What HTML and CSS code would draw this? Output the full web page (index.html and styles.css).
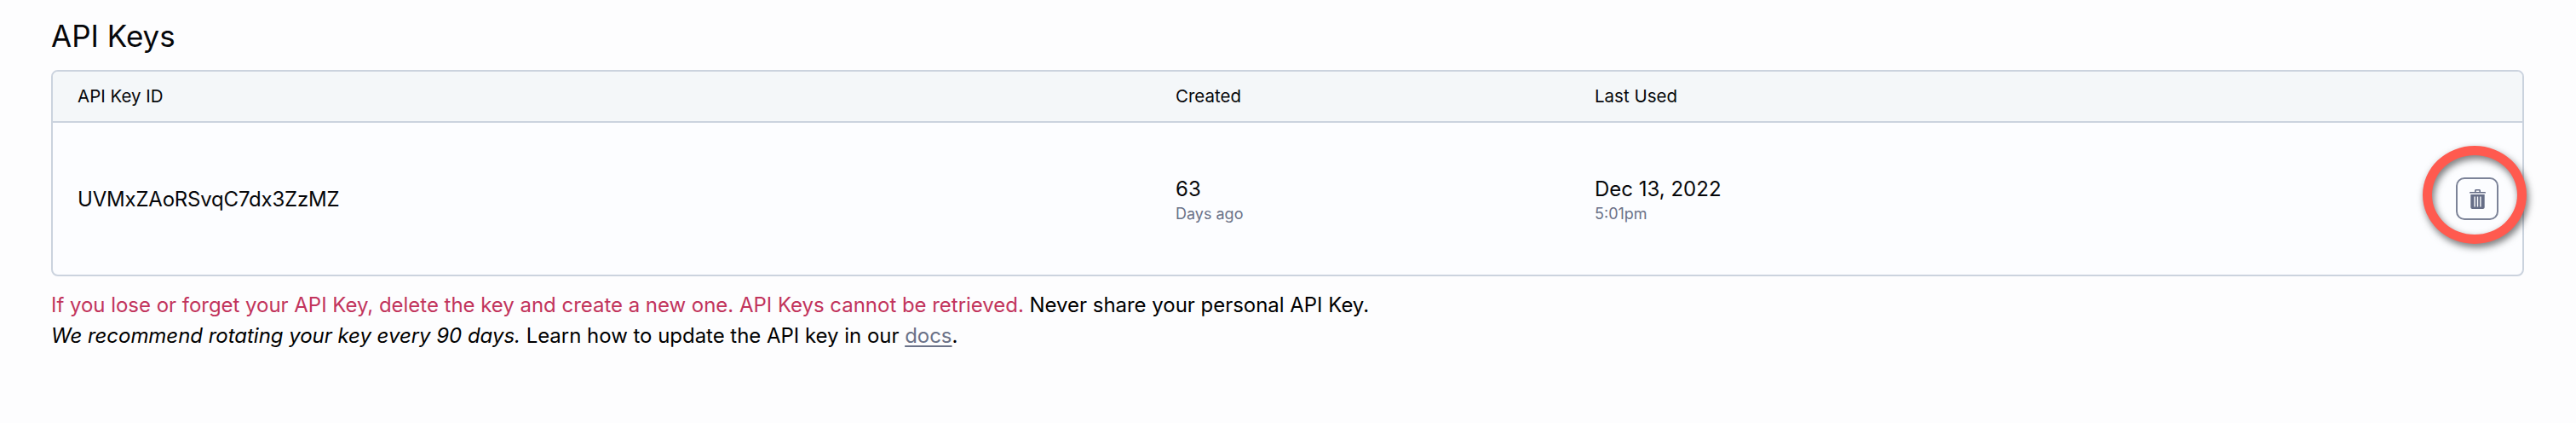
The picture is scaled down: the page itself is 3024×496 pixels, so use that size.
FILE: index.html
```html
<!DOCTYPE html>
<html>
<head>
  <meta charset="utf-8">
  <title>API Keys</title>
  <link rel="stylesheet" href="styles.css">
</head>
<body>
<div class="container">
  <h1>API Keys</h1>
  <div class="keys-card">
    <div class="keys-row keys-head">
      <div>API Key ID</div>
      <div>Created</div>
      <div>Last Used</div>
      <div></div>
    </div>
    <div class="keys-row keys-body">
      <div class="key-id">UVMxZAoRSvqC7dx3ZzMZ</div>
      <div class="stamp">
        <div>63</div>
        <div class="sub">Days ago</div>
      </div>
      <div class="stamp">
        <div>Dec 13, 2022</div>
        <div class="sub">5:01pm</div>
      </div>
      <div class="action">
        <button type="button" class="delete-btn" aria-label="Delete key">
          <svg class="trash" viewBox="0 0 19 23" width="19" height="23">
            <path d="M6 3 V1.6 C6 .7 6.7 0 7.6 0 H11.4 C12.3 0 13 .7 13 1.6 V3 H18.2 C18.6 3 19 3.3 19 3.8 V4.6 H0 V3.8 C0 3.3 .4 3 .8 3 Z M7.6 3 H11.4 V1.6 H7.6 Z"/>
            <path fill-rule="evenodd" d="M1.3 6 H17.7 V21 C17.7 22.1 16.8 23 15.7 23 H3.3 C2.2 23 1.3 22.1 1.3 21 Z M5.4 8.5 V20.5 H6.8 V8.5 Z M8.8 8.5 V20.5 H10.2 V8.5 Z M12.2 8.5 V20.5 H13.6 V8.5 Z"/>
          </svg>
        </button>
        <span class="ring"></span>
      </div>
    </div>
  </div>
  <p class="note">
    <span class="warn">If you lose or forget your API Key, delete the key and create a new one. API Keys cannot be retrieved.</span>
    Never share your personal API Key.<br>
    <em>We recommend rotating your key every 90 days.</em> Learn how to update the API key in our <a href="#">docs</a>.
  </p>
</div>
</body>
</html>
```

FILE: styles.css
```css
body {
  font-family: Inter, "Liberation Sans", sans-serif;
  background-color: #fdfdfe;
  color: #06070a;
  margin: 0;
  padding: 0;
}
.container {
  padding: 20px 61px 0 60px;
}
h1 {
  margin: 0 0 18px;
  font-size: 35px;
  line-height: 44px;
  font-weight: 400;
}
.keys-card {
  border: 2px solid #cbd3de;
  border-radius: 8px;
  background-color: #fcfdff;
}
.keys-row {
  display: grid;
  grid-template-columns: 1289px 492px 1fr 78px;
  padding-left: 29px;
  align-items: center;
}
.keys-head {
  height: 56px;
  padding-bottom: 2px;
  background-color: #f4f7f9;
  border-bottom: 2px solid #cbd3de;
  border-radius: 6px 6px 0 0;
  font-size: 20.5px;
  font-weight: 400;
}
.keys-body {
  height: 178px;
  font-size: 24px;
  line-height: 30px;
}
.key-id {
  padding-top: 1px;
  letter-spacing: -0.2px;
}
.stamp {
  padding-top: 4px;
}
.sub {
  margin-top: 2px;
  font-size: 18px;
  line-height: 24px;
  color: #6b7288;
}
.action {
  position: relative;
  display: flex;
}
.delete-btn {
  width: 50px;
  height: 50px;
  padding: 0;
  background-color: transparent;
  border: 2px solid #7c8398;
  border-radius: 10px;
  display: flex;
  align-items: center;
  justify-content: center;
  cursor: pointer;
}
.trash {
  fill: #666e87;
}
.ring {
  position: absolute;
  left: -39px;
  top: -37px;
  width: 122px;
  height: 115px;
  box-sizing: border-box;
  border: 11px solid #ff5a4f;
  border-radius: 50%;
  filter: drop-shadow(2px 4px 4px rgba(0, 0, 0, 0.55));
}
.note {
  margin: 16px 0 0;
  font-size: 24px;
  line-height: 36px;
  letter-spacing: -0.03px;
  color: #000;
}
.warn {
  color: #c2345c;
}
.note a {
  color: #6b7288;
  text-decoration-thickness: 2px;
  text-underline-offset: 3px;
}
```
